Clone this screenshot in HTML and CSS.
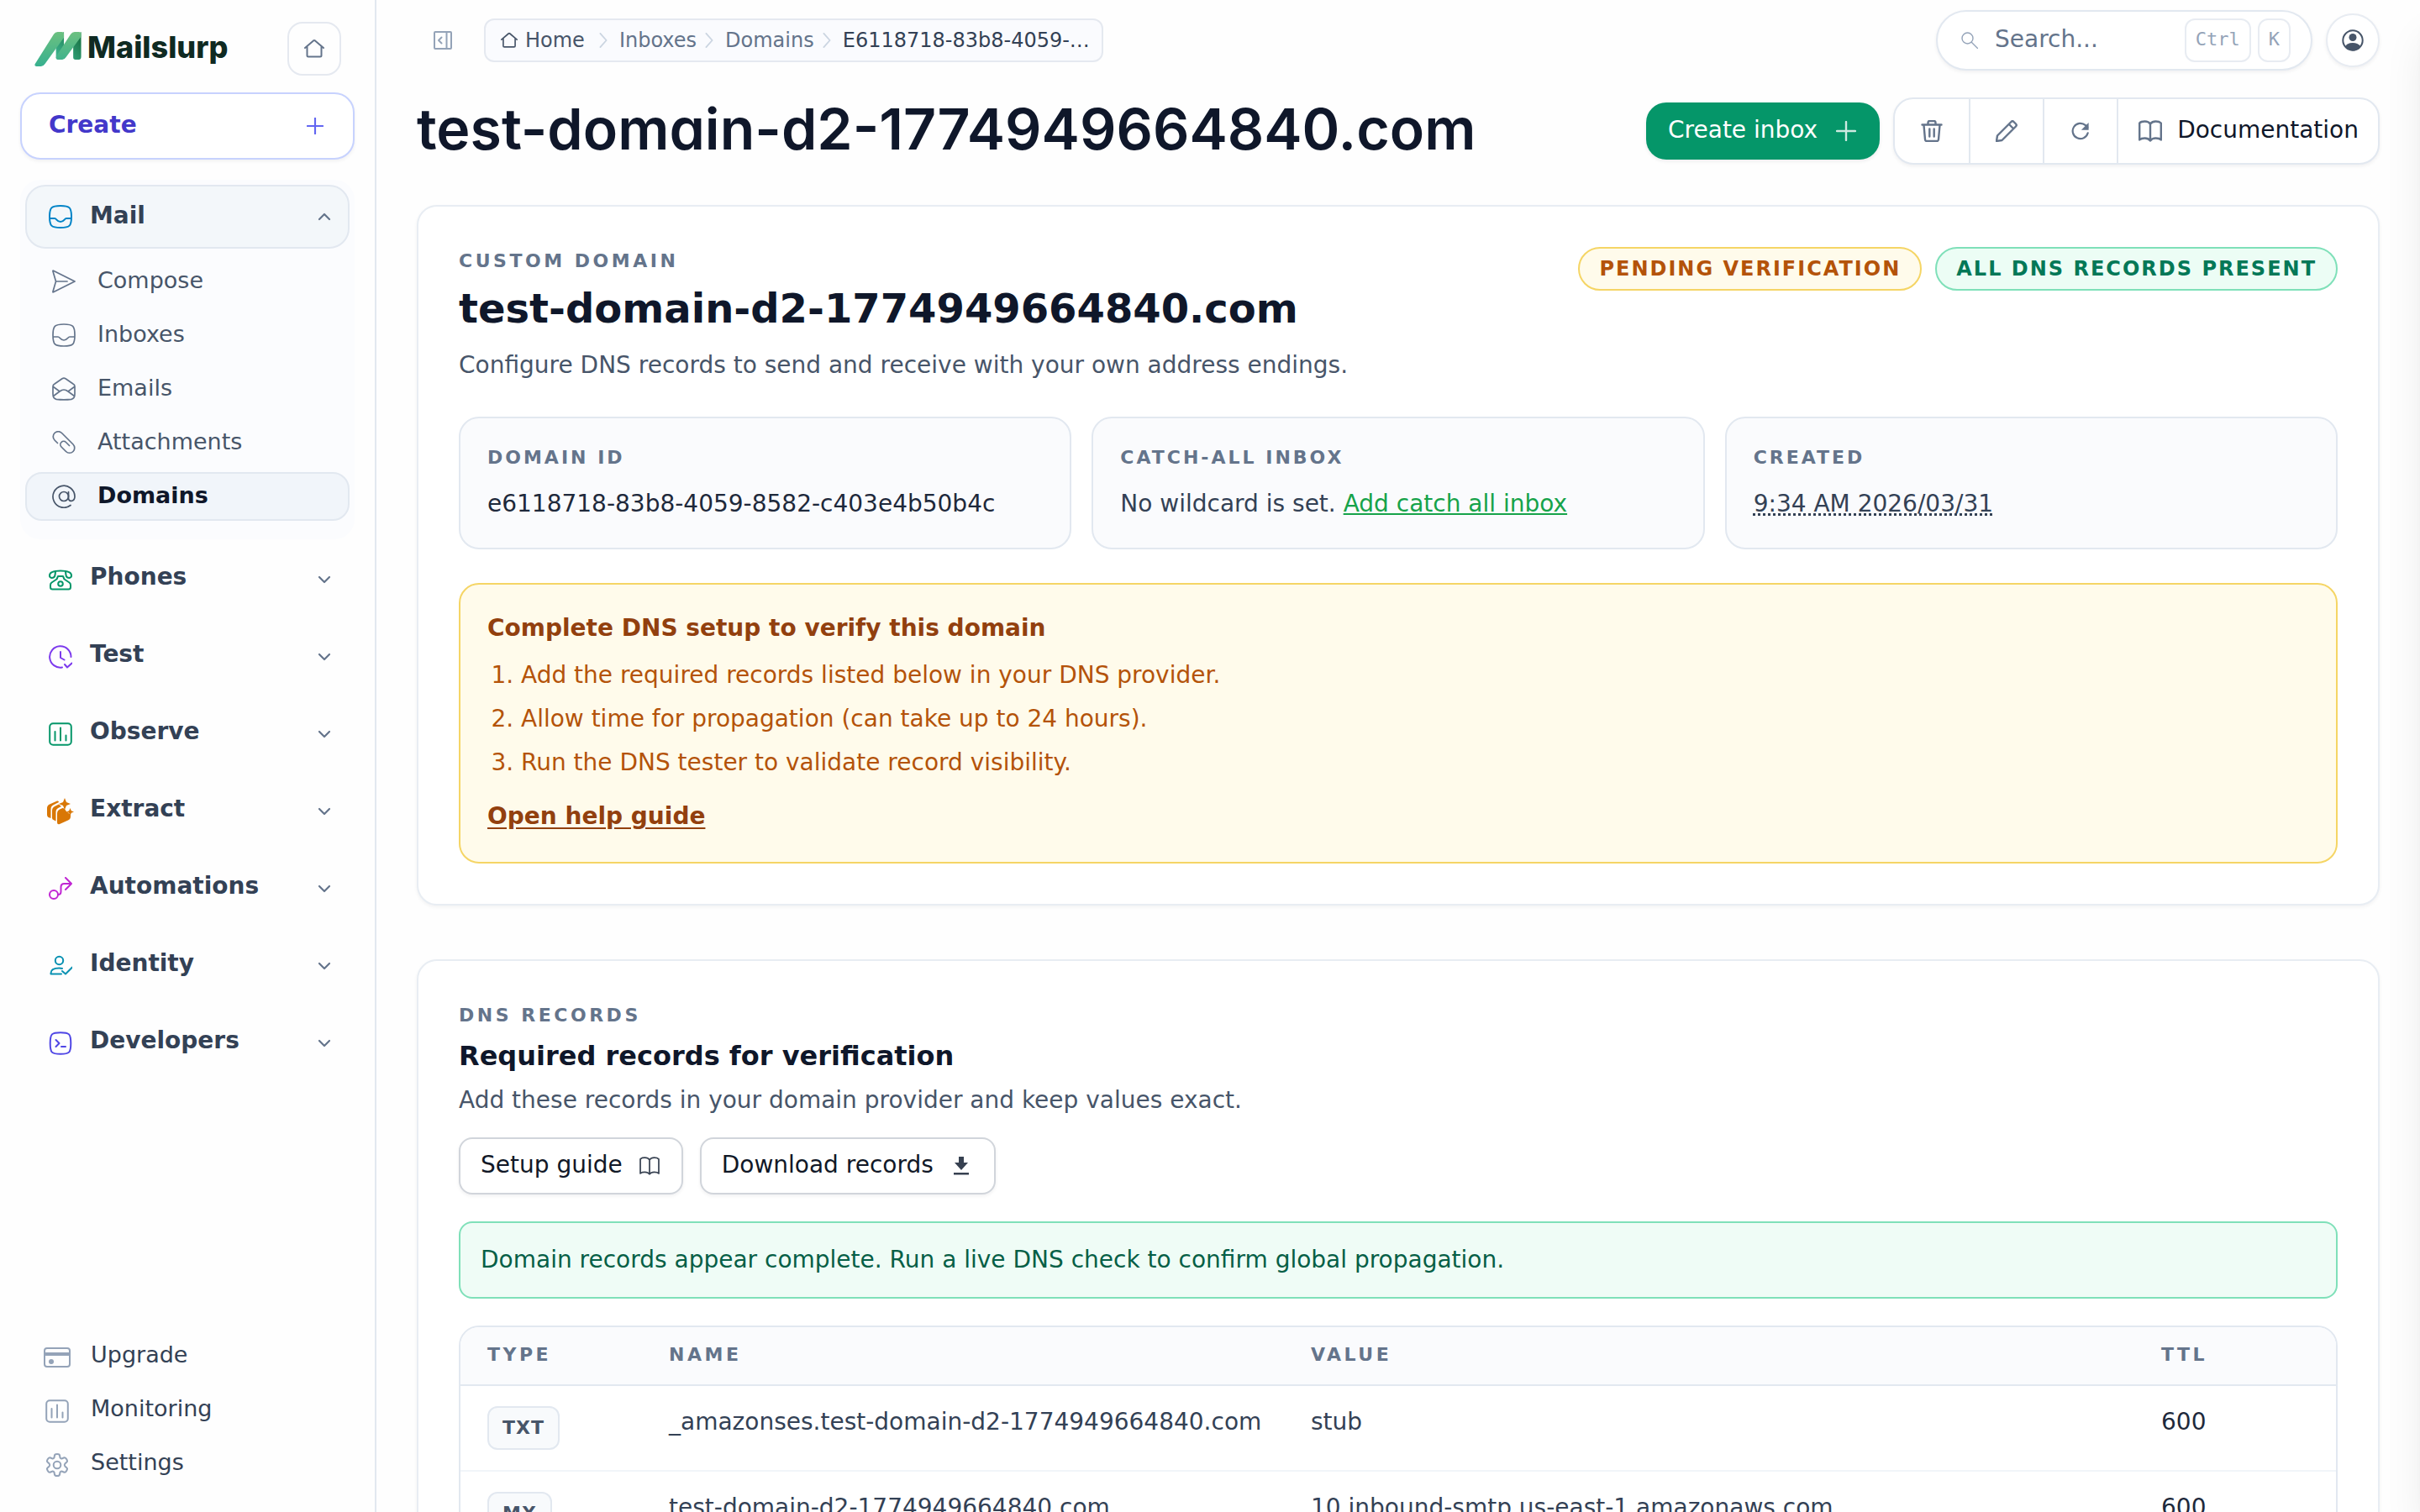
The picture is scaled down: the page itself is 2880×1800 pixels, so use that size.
FILE: index.html
```html
<!DOCTYPE html>
<html lang="en">
<head>
<meta charset="utf-8">
<title>test-domain-d2-1774949664840.com</title>
<link rel="stylesheet" href="styles.css">
</head>
<body>
<svg class="defs" width="0" height="0" aria-hidden="true">
  <defs>
    <linearGradient id="leaf" x1="0" y1="0" x2="0" y2="1"><stop offset="0" stop-color="#6cc080"/><stop offset="1" stop-color="#37b08f"/></linearGradient>
    <linearGradient id="fold" x1="1" y1="0" x2="0" y2="1"><stop offset="0.2" stop-color="#1c7a4c"/><stop offset="0.9" stop-color="#3bb08c"/></linearGradient>
  </defs>
  <symbol id="i-home" viewBox="0 0 24 24"><path d="M1 11 11 2.400q1-.8 2 0L23 11M3.500 9v11q0 1.500 1.500 1.500h14q1.500 0 1.500-1.500V9"/></symbol>
  <symbol id="i-plus" viewBox="0 0 24 24"><path d="M12 1v22M1 12h22"/></symbol>
  <symbol id="i-up" viewBox="0 0 24 24"><path d="m6 15 6-6 6 6"/></symbol>
  <symbol id="i-down" viewBox="0 0 24 24"><path d="m6 9 6 6 6-6"/></symbol>
  <symbol id="i-right" viewBox="0 0 12 20"><path d="m2 1 8 9-8 9"/></symbol>
  <symbol id="i-inbox" viewBox="0 0 28 28"><path d="M14 1c11 0 13 2 13 13s-2 13-13 13S1 25 1 14 3 1 14 1ZM1.200 16H7c2.500 0 2.500 4 7 4s4.500-4 7-4h5.800"/></symbol>
  <symbol id="i-send" viewBox="0 0 28 28"><path d="M1.500 1.200 27 14 1.500 26.800Q.8 27 1 26l3.500-12L1 2q-.2-1 .5-.8ZM4.500 14H18"/></symbol>
  <symbol id="i-mail" viewBox="0 0 28 28"><path d="M1 11q0-2 2-3L12 1.700q2-1.200 4 0L25 8q2 1 2 3v9q0 5.500-4 6.300-9 1-18 0-4-.8-4-6.300ZM1.500 11.500 9 17M26.500 11.500 19 17M1.500 22.500 9 17l2.500-1.500q2.500-1 5 0L19 17l7.500 5.500"/></symbol>
  <symbol id="i-clip" viewBox="0 0 28 28"><path d="M6.500 14.500 3 11a6 6 0 0 1 8.500-8.500l13.500 13.500a6 6 0 0 1-8.500 8.500L11 19a3.800 3.800 0 0 1 5.500-5.500l4 4"/></symbol>
  <symbol id="i-at" viewBox="0 0 28 28"><circle cx="14" cy="14" r="5.500"/><path d="M19.500 8.500V16c0 5 7.500 4.500 7.500-2a13 13 0 1 0-5 10.500"/></symbol>
  <symbol id="i-phone" viewBox="0 0 28 28"><path d="M1 9q0-5.500 13-5.500T27 9q.2 2.500-2.500 3-3.500 0-4-3.500L20 5M1 9q-.2 2.500 2.500 3 3.500 0 4-3.500L8 5M11 10h6l1.500 3.500 6 4q1.500 1 1.500 3V23q0 2.500-2.500 2.500h-19Q2 25.500 2 23v-2.500q0-2 1.500-3l6-4Z"/><circle cx="14" cy="19" r="2.800"/></symbol>
  <symbol id="i-clock" viewBox="0 0 28 28"><path d="M16 26.500A12.700 12.700 0 1 1 26.500 14M14 8v7l4.500 2.500M19 23l3 3.500 5.500-5"/></symbol>
  <symbol id="i-chart" viewBox="0 0 28 28"><rect x="1.200" y="1.200" width="25.600" height="25.600" rx="4"/><path d="M7.500 11v10.500M14 6.500v15M20.500 15.500v6"/></symbol>
  <symbol id="i-extract" viewBox="0 0 32 32"><g fill="currentColor" stroke="none"><path d="M0 12q0-3 3-4.500l9-4q2-.5 2 1.500L8 8q-3.500 1.500-3.500 5v11L1.500 23Q0 22 0 20Z"/><path d="M6 15q0-3.500 3-5l5-2.500 3 2.500-3 1.500q-3.500 1.500-3.500 5v11L7.500 26Q6 25.500 6 23.500Z"/><path d="M12 18.500q0-3.500 3-5l3.500-1.500 2 .5 2.500 3.500 5 4v2q0 3-3 4.500L15 31q-3 1-3-2Z"/><path d="m21 0 2 5 5 2-5 2-2 5-2-5-5-2 5-2ZM27.500 12l1.300 3.200 3.200 1.300-3.200 1.300L27.500 21l-1.300-3.200-3.200-1.300 3.200-1.300Z"/></g></symbol>
  <symbol id="i-flow" viewBox="0 0 28 28"><circle cx="6" cy="21" r="5"/><path d="M11 21q3.500 0 3.500-3.500V12q0-4 4-4H27M20 1l7 7-7 7"/></symbol>
  <symbol id="i-user" viewBox="0 0 28 28"><circle cx="12.500" cy="7.500" r="4.700"/><path d="M15 23.500H2.500v-1q0-6 10-6 2 0 3.500.5M16 20l4 3.500 8-8"/></symbol>
  <symbol id="i-term" viewBox="0 0 28 28"><path d="M14 1.200c10.500 0 12.300 1.500 12.300 12.800S24.500 26.800 14 26.800 1.700 25.300 1.700 14 3.500 1.200 14 1.200ZM8.500 10l4 4-4 4M15 18h5"/></symbol>
  <symbol id="i-card" viewBox="0 0 32 24"><rect x="1" y="1" width="30" height="22" rx="3"/><path fill="currentColor" stroke="none" d="M1 6h30v4H1Z"/><circle cx="9" cy="17" r="3" fill="currentColor" stroke="none"/></symbol>
  <symbol id="i-gear" viewBox="0 0 28 28"><circle cx="14" cy="14" r="4.300"/><path d="M11 2.500Q11.300 1 14 1t3 1.500l.5 2.800q.8 1.500 2.500 1l2.500-1q1.500-.4 2.800 2t.2 3.200L23.300 12.500q-1.200 1.500 0 3l2.200 2q1.100.8-.2 3.200t-2.800 2l-2.500-1q-1.700-.5-2.500 1l-.5 2.800Q16.700 27 14 27t-3-1.500l-.5-2.800q-.8-1.500-2.500-1l-2.500 1q-1.500.4-2.800-2t-.2-3.200l2.200-2q1.200-1.500 0-3L2.500 10.500Q1.400 9.700 2.700 7.300t2.800-2l2.500 1q1.700.5 2.500-1Z"/></symbol>
  <symbol id="i-panel" viewBox="0 0 22 22"><rect x="1" y="1" width="20" height="20" rx="1"/><path d="M15.500 1v20M9.500 7.500 6 11l3.500 3.500"/></symbol>
  <symbol id="i-search" viewBox="0 0 20 20"><circle cx="7.500" cy="7.500" r="6.500"/><path d="m12.500 12.500 7 7"/></symbol>
  <symbol id="i-avatar" viewBox="0 0 26 26"><circle cx="13" cy="13" r="11.700"/><circle cx="13" cy="9.500" r="4.500" fill="currentColor" stroke="none"/><path fill="currentColor" stroke="none" d="M4 20q3-4 9-4t9 4q-3.500 5.500-9 5.500T4 20Z"/></symbol>
  <symbol id="i-trash" viewBox="0 0 26 26"><path d="M1.500 5.500h23M8.500 5V3q0-2 2-2h5q2 0 2 2v2M3.500 6l1.500 17q.2 2 2 2h12q1.800 0 2-2l1.500-17M10.300 10.500v9M15.700 10.500v9"/></symbol>
  <symbol id="i-pencil" viewBox="0 0 26 26"><path d="M2 18.500 18.500 2q1.500-1.500 3 0l2.500 2.500q1.500 1.500 0 3L7.500 24 1 25ZM16 5l5 5"/></symbol>
  <symbol id="i-refresh" viewBox="0 0 24 24"><path d="M21.500 14.500A10 10 0 1 1 18.500 4.500L21 7"/><path fill="currentColor" stroke="none" d="M22.500 1v9.500H13Z"/></symbol>
  <symbol id="i-book" viewBox="0 0 28 26"><path d="M14 4.500v20M14 4.500Q12 1.500 7.500 1.500T1.200 3.500v20q2-2 6.300-2t6.500 3q2-3 6.500-3t6.300 2v-20q-2-2-6.300-2T14 4.500Z"/></symbol>
  <symbol id="i-download" viewBox="-3 -2 26 26"><path fill="currentColor" stroke="none" d="M7 0h6v7h5l-8 9-8-9h5ZM1 19h18v2.500H1Z"/></symbol>
</svg>

<div class="app">
  <aside class="sidebar">
    <div class="brand-row">
      <a class="brand" href="#">
        <svg class="brand-mark" viewBox="0 0 166 122" aria-hidden="true">
          <path fill="url(#fold)" d="M76 20 104 0v90q-2 8-10 8H84q-8 0-8-8ZM137 20 165 0v88q0 10-8 10h-12q-8 0-8-8Z"/>
          <path fill="url(#leaf)" d="M2 113 68 8q5-8 14-8h14q8 0 8 8v12L37 113q-6 9-14 9H7q-9 0-5-9ZM78 84 128 8q5-8 14-8h15q8 0 8 8v8L111 90q-5 8-13 8H86q-10 0-10-8Z"/>
        </svg>
        <span class="brand-name">Mailslurp</span>
      </a>
      <a class="home-button" href="#" aria-label="Home"><svg class="icon s24"><use href="#i-home"/></svg></a>
    </div>
    <button class="create" type="button"><span class="label">Create</span><svg class="icon s20"><use href="#i-plus"/></svg></button>

    <nav class="nav" aria-label="Main">
      <section class="group open">
        <button class="group-head" type="button" aria-expanded="true"><svg class="icon s28 sky"><use href="#i-inbox"/></svg><span class="label">Mail</span><svg class="icon chevron"><use href="#i-up"/></svg></button>
        <div class="group-items">
          <a class="item" href="#"><svg class="icon s28"><use href="#i-send"/></svg><span class="label">Compose</span></a>
          <a class="item" href="#"><svg class="icon s28"><use href="#i-inbox"/></svg><span class="label">Inboxes</span></a>
          <a class="item" href="#"><svg class="icon s28"><use href="#i-mail"/></svg><span class="label">Emails</span></a>
          <a class="item" href="#"><svg class="icon s28"><use href="#i-clip"/></svg><span class="label">Attachments</span></a>
          <a class="item active" href="#" aria-current="page"><svg class="icon s28"><use href="#i-at"/></svg><span class="label">Domains</span></a>
        </div>
      </section>
      <section class="group"><button class="group-head" type="button"><svg class="icon s28 emerald"><use href="#i-phone"/></svg><span class="label">Phones</span><svg class="icon chevron"><use href="#i-down"/></svg></button></section>
      <section class="group"><button class="group-head" type="button"><svg class="icon s28 violet"><use href="#i-clock"/></svg><span class="label">Test</span><svg class="icon chevron"><use href="#i-down"/></svg></button></section>
      <section class="group"><button class="group-head" type="button"><svg class="icon s28 emerald"><use href="#i-chart"/></svg><span class="label">Observe</span><svg class="icon chevron"><use href="#i-down"/></svg></button></section>
      <section class="group"><button class="group-head" type="button"><svg class="icon s32 amber"><use href="#i-extract"/></svg><span class="label">Extract</span><svg class="icon chevron"><use href="#i-down"/></svg></button></section>
      <section class="group"><button class="group-head" type="button"><svg class="icon s28 fuchsia"><use href="#i-flow"/></svg><span class="label">Automations</span><svg class="icon chevron"><use href="#i-down"/></svg></button></section>
      <section class="group"><button class="group-head" type="button"><svg class="icon s28 cyan"><use href="#i-user"/></svg><span class="label">Identity</span><svg class="icon chevron"><use href="#i-down"/></svg></button></section>
      <section class="group"><button class="group-head" type="button"><svg class="icon s28 indigo"><use href="#i-term"/></svg><span class="label">Developers</span><svg class="icon chevron"><use href="#i-down"/></svg></button></section>
    </nav>

    <nav class="foot" aria-label="Account">
      <a class="foot-item" href="#"><svg class="icon s32"><use href="#i-card"/></svg><span class="label">Upgrade</span></a>
      <a class="foot-item" href="#"><svg class="icon s28"><use href="#i-chart"/></svg><span class="label">Monitoring</span></a>
      <a class="foot-item" href="#"><svg class="icon s28"><use href="#i-gear"/></svg><span class="label">Settings</span></a>
    </nav>
  </aside>

  <main class="main">
    <header class="topbar">
      <button class="collapse" type="button" aria-label="Collapse sidebar"><svg class="icon s22"><use href="#i-panel"/></svg></button>
      <nav class="crumbs" aria-label="Breadcrumb">
        <a class="crumb home" href="#"><svg class="icon s20"><use href="#i-home"/></svg>Home</a>
        <svg class="icon sep"><use href="#i-right"/></svg>
        <a class="crumb" href="#">Inboxes</a>
        <svg class="icon sep"><use href="#i-right"/></svg>
        <a class="crumb" href="#">Domains</a>
        <svg class="icon sep"><use href="#i-right"/></svg>
        <span class="crumb current">E6118718-83b8-4059-…</span>
      </nav>
      <label class="search">
        <svg class="icon s20"><use href="#i-search"/></svg>
        <input class="search-input" type="text" placeholder="Search..." aria-label="Search">
        <kbd class="key">Ctrl</kbd><kbd class="key">K</kbd>
      </label>
      <button class="avatar" type="button" aria-label="Account"><svg class="icon s26"><use href="#i-avatar"/></svg></button>
    </header>

    <div class="title-row">
      <h1 class="title">test-domain-d2-1774949664840.com</h1>
      <button class="primary" type="button"><span class="label">Create inbox</span><svg class="icon s24"><use href="#i-plus"/></svg></button>
      <div class="tools">
        <button class="tool" type="button" aria-label="Delete"><svg class="icon s26"><use href="#i-trash"/></svg></button>
        <button class="tool" type="button" aria-label="Edit"><svg class="icon s26"><use href="#i-pencil"/></svg></button>
        <button class="tool" type="button" aria-label="Refresh"><svg class="icon s22"><use href="#i-refresh"/></svg></button>
        <a class="tool docs" href="#"><svg class="icon s28"><use href="#i-book"/></svg><span class="label">Documentation</span></a>
      </div>
    </div>

    <section class="card">
      <div class="card-head">
        <div>
          <p class="eyebrow">CUSTOM DOMAIN</p>
          <h2 class="domain">test-domain-d2-1774949664840.com</h2>
          <p class="lead">Configure DNS records to send and receive with your own address endings.</p>
        </div>
        <div class="pills"><span class="pill warn">PENDING VERIFICATION</span><span class="pill ok">ALL DNS RECORDS PRESENT</span></div>
      </div>
      <div class="facts">
        <div class="fact"><h3 class="fact-name">DOMAIN ID</h3><p class="fact-value strong">e6118718-83b8-4059-8582-c403e4b50b4c</p></div>
        <div class="fact"><h3 class="fact-name">CATCH-ALL INBOX</h3><p class="fact-value">No wildcard is set. <a class="green-link" href="#">Add catch all inbox</a></p></div>
        <div class="fact"><h3 class="fact-name">CREATED</h3><p class="fact-value"><abbr class="date" title="2026-03-31">9:34 AM 2026/03/31</abbr></p></div>
      </div>
      <div class="notice">
        <h3 class="notice-title">Complete DNS setup to verify this domain</h3>
        <ol class="steps">
          <li>Add the required records listed below in your DNS provider.</li>
          <li>Allow time for propagation (can take up to 24 hours).</li>
          <li>Run the DNS tester to validate record visibility.</li>
        </ol>
        <a class="notice-link" href="#">Open help guide</a>
      </div>
    </section>

    <section class="card">
      <p class="eyebrow">DNS RECORDS</p>
      <h2 class="section-title">Required records for verification</h2>
      <p class="lead tight">Add these records in your domain provider and keep values exact.</p>
      <div class="buttons">
        <button class="secondary" type="button"><span class="label">Setup guide</span><svg class="icon s24"><use href="#i-book"/></svg></button>
        <button class="secondary" type="button"><span class="label">Download records</span><svg class="icon s26"><use href="#i-download"/></svg></button>
      </div>
      <p class="success">Domain records appear complete. Run a live DNS check to confirm global propagation.</p>
      <div class="table-wrap">
        <table class="records">
          <colgroup><col class="c-type"><col class="c-name"><col><col class="c-ttl"></colgroup>
          <thead><tr><th>TYPE</th><th>NAME</th><th>VALUE</th><th>TTL</th></tr></thead>
          <tbody>
            <tr><td><span class="type">TXT</span></td><td>_amazonses.test-domain-d2-1774949664840.com</td><td>stub</td><td class="ttl">600</td></tr>
            <tr><td><span class="type">MX</span></td><td>test-domain-d2-1774949664840.com</td><td>10 inbound-smtp.us-east-1.amazonaws.com</td><td class="ttl">600</td></tr>
          </tbody>
        </table>
      </div>
    </section>
  </main>
</div>
<div class="drawer"></div>
</body>
</html>
```
FILE: styles.css
```css
*, *::before, *::after { box-sizing: border-box; }

body {
  margin: 0;
  background: #fefefe;
  color: #334155;
  font: 28px/40px "DejaVu Sans", sans-serif;
}
h1, h2, h3, p, ol { margin: 0; padding: 0; }
button { font: inherit; color: inherit; margin: 0; padding: 0; background: none; border: 0; text-align: left; }
a { color: inherit; text-decoration: none; }

.defs { position: absolute; }
.icon { flex: none; fill: none; stroke: currentColor; stroke-width: 2; stroke-linecap: round; stroke-linejoin: round; }
.s20 { width: 20px; height: 20px; }
.s22 { width: 22px; height: 22px; }
.s24 { width: 24px; height: 24px; }
.s26 { width: 26px; height: 26px; }
.s28 { width: 28px; height: 28px; }
.s32 { width: 32px; height: 32px; margin: 0 -2px; }
.label { padding-bottom: 2px; }
.group-head .label, .foot-item .label { padding-bottom: 6px; }

.app { display: flex; height: 100vh; }

/* Sidebar */
.sidebar {
  flex: none;
  display: flex;
  flex-direction: column;
  width: 448px;
  padding: 26px 24px 24px;
  border-right: 2px solid #e2e8f0;
}
.brand-row { display: flex; align-items: center; justify-content: space-between; padding: 0 16px 0 17px; }
.brand { display: flex; align-items: center; gap: 7px; }
.brand-mark { width: 56px; height: 41px; }
.brand-name { font: 800 36px/40px Inter, sans-serif; color: #0f2a22; padding-bottom: 4px; }
.home-button {
  display: grid;
  place-items: center;
  width: 64px;
  height: 64px;
  border: 2px solid #e5e9f0;
  border-radius: 18px;
  color: #64748b;
}
.create {
  display: flex;
  align-items: center;
  justify-content: space-between;
  height: 80px;
  margin-top: 20px;
  padding: 0 35px 0 32px;
  border: 2px solid #c7d2fe;
  border-radius: 24px;
  background: #fff;
  box-shadow: 0 2px 4px rgba(15, 23, 42, .06);
  color: #4338ca;
  font-weight: 700;
}
.create .icon { color: #6366f1; stroke-width: 2.600; }

.nav { display: flex; flex-direction: column; gap: 4px; margin-top: 24px; }
.group { padding: 6px; border-radius: 24px; }
.group.open { padding-bottom: 22px; background: #fbfcfe; }
.group-head {
  display: flex;
  align-items: center;
  gap: 21px;
  width: 100%;
  height: 76px;
  padding: 0 16px 0 26px;
  border: 2px solid transparent;
  border-radius: 24px;
  font-weight: 700;
}
.open .group-head { background: #f3f7fa; border-color: #e2e8f0; }
.open .group-head .label { padding-bottom: 2px; }
.chevron { width: 24px; height: 24px; margin-left: auto; color: #64748b; stroke-width: 2.200; }
.group-items { display: flex; flex-direction: column; gap: 6px; padding-top: 10px; }
.item {
  display: flex;
  align-items: center;
  gap: 26px;
  height: 58px;
  padding: 0 30px;
  border: 2px solid transparent;
  border-radius: 20px;
  color: #475569;
  font-size: 27px;
}
.item .icon { color: #64748b; stroke-width: 1.700; }
.item.active { background: #f1f5fa; border-color: #e2e8f0; color: #0f172a; font-weight: 700; }
.item.active .icon { color: #475569; }
.sky { color: #0284c7; }
.emerald { color: #059669; }
.violet { color: #7c3aed; }
.amber { color: #d97706; }
.fuchsia { color: #c026d3; }
.cyan { color: #0891b2; }
.indigo { color: #4f46e5; }

.foot { display: flex; flex-direction: column; margin-top: auto; }
.foot-item { display: flex; align-items: center; gap: 26px; height: 64px; padding: 0 30px; font-size: 27px; }
.foot-item .icon { color: #94a3b8; }

/* Main column */
.main {
  flex: 1;
  min-width: 0;
  padding: 12px 48px 48px;
  overflow-y: auto;
  scrollbar-width: none;
}
.topbar { display: flex; align-items: center; height: 72px; padding-left: 20px; }
.collapse { display: grid; color: #94a3b8; }
.crumbs {
  display: flex;
  align-items: center;
  height: 52px;
  margin: 0 auto 0 38px;
  padding: 0 14px 0 18px;
  border: 2px solid #e5e9f0;
  border-radius: 12px;
  background: #fafbfe;
  font-size: 24px;
  line-height: 32px;
}
.crumb { color: #64748b; }
.crumb.home { display: flex; align-items: center; gap: 9px; color: #475569; }
.crumb.current { color: #334155; }
.sep { width: 12px; height: 18px; margin: 0 13px 0 16px; color: #cbd5e1; }
.sep ~ .sep { margin: 0 13px 0 9px; }
.search {
  display: flex;
  align-items: center;
  gap: 8px;
  width: 448px;
  height: 72px;
  padding: 0 24px 0 28px;
  border: 2px solid #e2e8f0;
  border-radius: 36px;
  background: #fff;
  box-shadow: 0 2px 4px rgba(15, 23, 42, .06);
}
.search .icon { color: #94a3b8; stroke-width: 1.400; }
.search-input { flex: 1; min-width: 0; padding: 0 12px 2px; border: 0; outline: 0; background: none; font: inherit; color: #334155; }
.search-input::placeholder { color: #64748b; opacity: 1; }
.key {
  height: 52px;
  padding: 0 11px;
  border: 2px solid #e8ecf2;
  border-radius: 12px;
  color: #94a3b8;
  font: 22px/46px "DejaVu Sans Mono", monospace;
}
.avatar {
  display: grid;
  place-items: center;
  width: 64px;
  height: 64px;
  margin-left: 16px;
  border: 2px solid #e8ecf2;
  border-radius: 50%;
  background: #fff;
  box-shadow: 0 2px 4px rgba(15, 23, 42, .06);
  color: #475569;
}

.title-row { display: flex; align-items: center; height: 80px; margin-top: 32px; }
.title {
  margin-right: auto;
  padding-bottom: 6px;
  color: #0f172a;
  font: 600 68px/80px Inter, sans-serif;
  font-feature-settings: "cv11";
  white-space: nowrap;
}
.primary {
  display: flex;
  align-items: center;
  gap: 22px;
  height: 68px;
  padding: 0 28px 0 26px;
  border-radius: 24px;
  background: #059669;
  box-shadow: 0 2px 4px rgba(15, 23, 42, .08);
  color: #fff;
}
.primary .icon { stroke-width: 2.400; opacity: .8; }
.tools {
  display: flex;
  height: 80px;
  margin-left: 16px;
  border: 2px solid #e2e8f0;
  border-radius: 24px;
  background: #fff;
  box-shadow: 0 2px 4px rgba(15, 23, 42, .06);
}
.tool { display: flex; align-items: center; justify-content: center; width: 88px; color: #64748b; }
.tool .icon { stroke-width: 2.400; }
.tool + .tool { border-left: 2px solid #e2e8f0; }
.tool.docs { gap: 18px; width: auto; padding: 0 23px 0 24px; }
.tool.docs .label { color: #0f172a; }

.card {
  margin-top: 48px;
  padding: 48px;
  border: 2px solid #e8edf3;
  border-radius: 24px;
  background: #fff;
  box-shadow: 0 2px 4px rgba(15, 23, 42, .05);
}
.card + .card { margin-top: 64px; }
.card-head { display: flex; justify-content: space-between; align-items: flex-start; }
.eyebrow { color: #64748b; font-size: 22px; font-weight: 700; line-height: 34px; letter-spacing: 0.16em; }
.domain { margin-top: 7px; color: #0f172a; font-size: 48px; line-height: 64px; }
.lead { margin-top: 16px; color: #475569; }
.lead.tight { margin-top: 13px; }
.pills { display: flex; gap: 16px; }
.pill {
  height: 52px;
  padding: 0 23px;
  border: 2px solid;
  border-radius: 26px;
  font-size: 24px;
  font-weight: 700;
  line-height: 48px;
  letter-spacing: 2px;
}
.pill.warn { background: #fffbeb; border-color: #f5d565; color: #b45309; }
.pill.ok { background: #ecfdf5; border-color: #7fe0b9; color: #047857; }

.facts { display: grid; grid-template-columns: repeat(3, 1fr); gap: 24px; margin-top: 41px; }
.fact { padding: 31px 32px 32px; border: 2px solid #e2e8f0; border-radius: 24px; background: #fafbfd; }
.fact-name { color: #64748b; font-size: 22px; line-height: 32px; letter-spacing: 3px; }
.fact-value { margin-top: 19px; }
.fact-value.strong { color: #1e293b; }
.green-link { color: #16a34a; text-decoration: underline; }
.date { text-decoration: underline dotted; }

.notice { margin-top: 40px; padding: 32px 32px 34px; border: 2px solid #f5d565; border-radius: 24px; background: #fffbeb; color: #b45309; }
.notice-title { color: #92400e; font-size: 28px; line-height: 40px; }
.steps { display: grid; gap: 12px; margin: 16px 0 24px; padding-left: 40px; }
.notice-link { display: block; width: fit-content; color: #92400e; font-weight: 700; text-decoration: underline; text-underline-offset: 4px; }

.section-title { margin-top: 11px; color: #0f172a; font-size: 32px; line-height: 40px; }
.buttons { display: flex; gap: 20px; margin-top: 24px; }
.secondary {
  display: flex;
  align-items: center;
  gap: 20px;
  height: 68px;
  padding: 0 26px 0 24px;
  border: 2px solid #d1d5db;
  border-radius: 16px;
  background: #fff;
  box-shadow: 0 2px 4px rgba(15, 23, 42, .06);
  color: #111827;
}
.secondary .icon { color: #374151; }
.success { margin-top: 32px; padding: 24px; border: 2px solid #7fe0b9; border-radius: 16px; background: #effcf6; color: #065f46; }

.table-wrap { margin-top: 32px; border: 2px solid #e2e8f0; border-radius: 24px; overflow: hidden; }
.records { width: 100%; border-collapse: separate; border-spacing: 0; table-layout: fixed; text-align: left; }
.c-type { width: 216px; }
.c-name { width: 764px; }
.c-ttl { width: 240px; }
.records th {
  padding: 17px 32px 19px;
  border-bottom: 2px solid #e2e8f0;
  background: #fafbfd;
  color: #64748b;
  font-size: 22px;
  line-height: 32px;
  letter-spacing: 0.16em;
}
.records td { padding: 24px 32px; border-bottom: 2px solid #f1f5f9; line-height: 38px; vertical-align: top; white-space: nowrap; }
.records .ttl { color: #1e293b; }
.type {
  display: block;
  width: fit-content;
  height: 52px;
  padding: 0 16px;
  border: 2px solid #e2e8f0;
  border-radius: 12px;
  background: #f8fafc;
  color: #475569;
  font-size: 22px;
  font-weight: 700;
  line-height: 48px;
  letter-spacing: 1px;
}

/* Closed drawer waiting past the right edge; only its shadow reaches the page */
.drawer {
  position: fixed;
  top: 0;
  bottom: 0;
  left: 100%;
  width: 600px;
  box-shadow: 0 40px 50px -10px rgba(0, 0, 0, .1), 0 16px 20px -12px rgba(0, 0, 0, .1);
}
```
